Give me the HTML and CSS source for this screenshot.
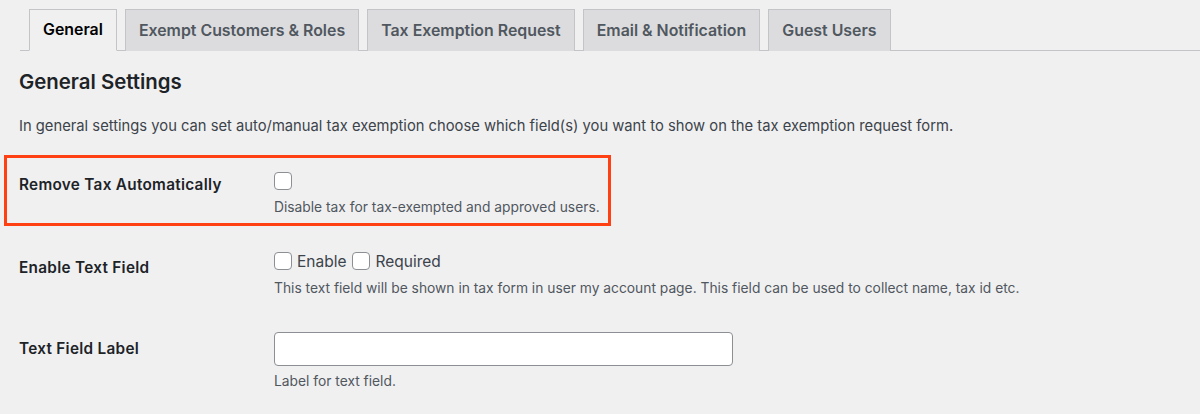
FILE: index.html
```html
<!DOCTYPE html>
<html>
<head>
<meta charset="utf-8">
<link rel="stylesheet" href="styles.css">
</head>
<body>
<div class="wrap">
  <nav class="tabs">
    <a class="tab active">General</a>
    <a class="tab">Exempt Customers &amp; Roles</a>
    <a class="tab">Tax Exemption Request</a>
    <a class="tab">Email &amp; Notification</a>
    <a class="tab">Guest Users</a>
  </nav>
  <h2 class="title">General Settings</h2>
  <p class="intro">In general settings you can set auto/manual tax exemption choose which field(s) you want to show on the tax exemption request form.</p>

  <div class="row highlight">
    <div class="label">Remove Tax Automatically</div>
    <div class="field">
      <div class="checks"><span class="cb"></span></div>
      <p class="desc">Disable tax for tax-exempted and approved users.</p>
    </div>
  </div>

  <div class="row r2">
    <div class="label">Enable Text Field</div>
    <div class="field">
      <div class="checks"><span class="cb"></span><span class="ct">Enable</span><span class="cb"></span><span class="ct">Required</span></div>
      <p class="desc">This text field will be shown in tax form in user my account page. This field can be used to collect name, tax id etc.</p>
    </div>
  </div>

  <div class="row r3">
    <div class="label">Text Field Label</div>
    <div class="field">
      <div class="input"></div>
      <p class="desc">Label for text field.</p>
    </div>
  </div>
</div>
</body>
</html>
```
FILE: styles.css
```css
html, body {
  margin: 0;
  padding: 0;
  background: #f0f0f1;
  font-family: "Inter", "Liberation Sans", sans-serif;
  color: #3c434a;
}
.wrap {
  padding: 9px 0 0 0;
}
.tabs {
  margin-left: 20px;
  padding-left: 9px;
  border-bottom: 1px solid #c3c4c7;
  display: flex;
  gap: 8px;
  height: 41px;
}
.tab {
  box-sizing: border-box;
  height: 42px;
  display: flex;
  align-items: center;
  padding: 0 13px 1px 13px;
  background: #dcdcde;
  border: 1px solid #c3c4c7;
  border-bottom: none;
  color: #50575e;
  font-weight: 600;
  font-size: 15.9px;
  white-space: nowrap;
}
.tab.active {
  background: #f0f0f1;
  color: #000;
  border-bottom: 1px solid #f0f0f1;
}
.title {
  margin: 18px 0 0 19px;
  font-size: 20.4px;
  line-height: 26px;
  font-weight: 600;
  color: #1d2327;
}
.intro {
  margin: 21px 0 0 19px;
  font-size: 14.75px;
  line-height: 20px;
}
.row {
  display: flex;
}
.label {
  width: 255px;
  flex: none;
  font-weight: 600;
  font-size: 15.3px;
  letter-spacing: 0.3px;
  line-height: 20px;
  color: #1d2327;
}
.field {
  flex: none;
}
.highlight {
  box-sizing: border-box;
  width: 607px;
  margin: 19px 0 0 4px;
  border: 3px solid #ff4013;
  padding: 14px 0 7px 12px;
}
.highlight .label { padding-top: 3px; }
.checks {
  display: flex;
  align-items: center;
  height: 18px;
}
.cb {
  box-sizing: border-box;
  width: 18px;
  height: 18px;
  border: 1px solid #8c8f94;
  border-radius: 4px;
  background: #fff;
}
.ct {
  font-size: 15.5px;
  margin: 0 6px 0 5px;
  color: #3c434a;
}
.desc {
  margin: 8px 0 0 0;
  font-size: 13.8px;
  line-height: 18px;
  color: #50575e;
  white-space: nowrap;
}
.r2 {
  margin: 26px 0 0 19px;
}
.r2 .label { padding-top: 6px; }
.r2 .desc { margin-top: 9px; }
.r3 {
  margin: 35px 0 0 19px;
}
.r3 .label { padding-top: 7px; }
.input {
  box-sizing: border-box;
  width: 459px;
  height: 34px;
  background: #fff;
  border: 1px solid #8c8f94;
  border-radius: 4px;
}
.r3 .desc { margin-top: 6px; }
```
